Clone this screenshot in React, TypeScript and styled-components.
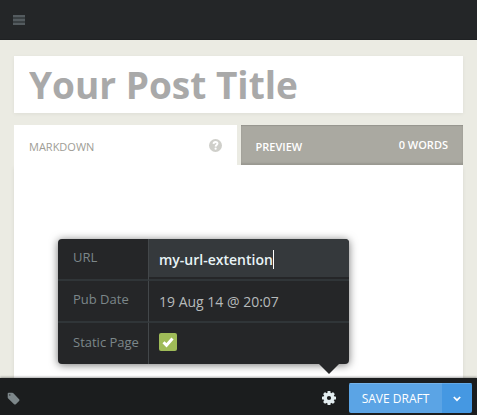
import React, { useState } from "react";
import styled, { createGlobalStyle } from "styled-components";

const GlobalStyle = createGlobalStyle`
  *, *::before, *::after { box-sizing: border-box; }
  body {
    margin: 0;
    background: #ebebe3;
    font-family: "Open Sans", "Noto Sans", sans-serif;
    font-size: 13px;
  }
  button, input { font: inherit; margin: 0; }
`;

const Page = styled.div`
  display: flex;
  flex-direction: column;
  min-height: 100vh;
`;

const TopBar = styled.header`
  display: flex;
  align-items: center;
  height: 40px;
  padding: 0 13px;
  background: #242628;
  border-bottom: 1px solid #1f2123;
`;

const IconButton = styled.button<{ $tone: string }>`
  display: flex;
  padding: 0;
  border: 0;
  background: none;
  color: ${(p) => p.$tone};
  cursor: pointer;
`;

const Editor = styled.main`
  flex: 1;
  display: flex;
  flex-direction: column;
  gap: 12px;
  padding: 16px 14px 0;
`;

const TitleInput = styled.input`
  width: 100%;
  height: 57px;
  padding: 0 15px;
  border: 0;
  outline: 0;
  background: #fff;
  box-shadow: 0 1px 4px rgba(0, 0, 0, 0.06);
  color: #a9a9a9;
  font-size: 37px;
  font-weight: 700;
  &::placeholder { color: #a9a9a9; opacity: 1; }
`;

const Workspace = styled.section`
  flex: 1;
  display: flex;
  flex-direction: column;
`;

const Tabs = styled.div`
  display: grid;
  grid-template-columns: 1fr 1fr;
  gap: 4px;
`;

const Tab = styled.div<{ $active?: boolean }>`
  display: flex;
  align-items: center;
  justify-content: space-between;
  height: 40px;
  padding: 0 15px;
  background: ${(p) => (p.$active ? "#fff" : "#aaa9a1")};
  color: ${(p) => (p.$active ? "#9e9d95" : "#fff")};
  font-size: 11px;
  font-weight: ${(p) => (p.$active ? 400 : 600)};
  box-shadow: ${(p) =>
    p.$active ? "none" : "inset 0 1px 1px rgba(0,0,0,.12), inset 0 -2px 2px rgba(0,0,0,.1)"};
`;

const TabButton = styled.button`
  padding: 2px 0 0;
  border: 0;
  background: none;
  color: inherit;
  cursor: pointer;
`;

const WordCount = styled.span`
  padding-bottom: 2px;
`;

const TextArea = styled.textarea`
  flex: 1;
  width: 100%;
  padding: 15px;
  border: 0;
  outline: 0;
  resize: none;
  background: #fff;
  box-shadow: 0 3px 4px rgba(0, 0, 0, 0.08);
`;

const BottomBar = styled.footer`
  position: relative;
  display: flex;
  align-items: center;
  justify-content: space-between;
  height: 37px;
  padding: 3px 5px 0 7px;
  background: #1b1d1e;
  box-shadow: 0 -1px 2px rgba(0, 0, 0, 0.35);
`;

const Actions = styled.div`
  display: flex;
  align-items: center;
  gap: 13px;
`;

const SettingsAnchor = styled.div`
  position: relative;
`;

const Popover = styled.form`
  position: absolute;
  right: -13px;
  bottom: 41px;
  display: grid;
  grid-template-columns: 90px 201px;
  border-radius: 4px;
  background: #252628;
  box-shadow: 0 1px 9px rgba(0, 0, 0, 0.55);
  &::after {
    content: "";
    position: absolute;
    top: 100%;
    right: 10px;
    border: 10px solid transparent;
    border-top-color: #252628;
    border-bottom: 0;
  }
`;

const Label = styled.label`
  display: flex;
  align-items: center;
  height: 42px;
  padding: 0 0 4px 15px;
  border-bottom: 2px solid #303538;
  color: #7c878a;
  &:last-of-type { height: 41px; border-bottom: 0; }
`;

const Field = styled.div<{ $focused?: boolean; $last?: boolean }>`
  display: flex;
  align-items: center;
  height: ${(p) => (p.$last ? 41 : 42)}px;
  padding-left: 10px;
  border-left: 1px solid #43474a;
  border-bottom: ${(p) => (p.$last ? "0" : "2px solid #303538")};
  border-top-right-radius: ${(p) => (p.$focused ? 4 : 0)}px;
  background: ${(p) => (p.$focused ? "linear-gradient(#35393c 38px, #252628 38px)" : "none")};
`;

const Caret = styled.span`
  width: 1px;
  height: 19px;
  background: #fff;
`;

const TextInput = styled.input<{ $strong?: boolean }>`
  field-sizing: content;
  max-width: 180px;
  padding: 0;
  border: 0;
  outline: 0;
  background: none;
  caret-color: transparent;
  color: ${(p) => (p.$strong ? "#e8f3f6" : "#b6babb")};
  font-size: 14px;
  font-weight: ${(p) => (p.$strong ? 600 : 400)};
`;

const Checkbox = styled.span`
  position: relative;
  display: flex;
  width: 18px;
  height: 18px;
  margin-bottom: 4px;
  svg {
    position: absolute;
    inset: 0;
    pointer-events: none;
  }
`;

const CheckboxInput = styled.input`
  appearance: none;
  width: 18px;
  height: 18px;
  border-radius: 2px;
  background: #4a5053;
  cursor: pointer;
  &:checked { background: #9fbb58; }
  &:not(:checked) + svg { display: none; }
`;

const SplitButton = styled.div`
  display: flex;
  height: 30px;
  border-radius: 2px;
  overflow: hidden;
  color: #fff;
`;

const SaveButton = styled.button`
  width: 93px;
  padding: 0;
  border: 0;
  background: #5ba4e5;
  box-shadow: inset 0 1px 0 #74b3ea;
  color: inherit;
  font-size: 12px;
  cursor: pointer;
`;

const SaveOptions = styled.button`
  display: flex;
  align-items: center;
  justify-content: center;
  width: 30px;
  padding: 2px 0 0;
  border: 0;
  background: #4598e2;
  box-shadow: inset 0 1px 0 #62a9e7;
  color: inherit;
  cursor: pointer;
`;

const MenuIcon = () => (
  <svg width="12" height="10" viewBox="0 0 12 10" aria-hidden="true">
    <path d="M0 0h12v10H0z" fill="#3a4043" />
    <path d="M0 0h12v2H0zM0 4h12v2H0zM0 8h12v2H0z" fill="#545b5f" />
  </svg>
);

const HelpIcon = () => (
  <svg width="13" height="13" viewBox="0 0 13 13" aria-hidden="true">
    <circle cx="6.5" cy="6.5" r="6.5" fill="currentColor" />
    <path
      d="M4.5 4.9C4.6 3.6 5.5 3 6.5 3c1.2 0 2 .6 2 1.6 0 1.4-1.8 1.4-1.9 3"
      fill="none"
      stroke="#fff"
      strokeWidth="1.9"
    />
    <circle cx="6.6" cy="9.7" r="1.1" fill="#fff" />
  </svg>
);

const TagIcon = () => (
  <svg width="13" height="13" viewBox="0 0 13 13" aria-hidden="true">
    <path
      fillRule="evenodd"
      fill="currentColor"
      d="M1.5 .8h3.8c.4 0 .8.2 1.1.5l5.7 5.9c.5.5.5 1.2 0 1.7l-3.3 3.3c-.5.5-1.2.5-1.7 0L1.2 6.6C.9 6.3.7 5.9.7 5.5V1.6c0-.4.4-.8.8-.8zM2.8 2.2a.7.7 0 1 0 0 1.4.7.7 0 0 0 0-1.4z"
    />
  </svg>
);

const GearIcon = () => (
  <svg width="14" height="14" viewBox="0 0 14 14" aria-hidden="true">
    <circle cx="7" cy="7" r="3.8" fill="none" stroke="currentColor" strokeWidth="3.4" />
    {[0, 45, 90, 135, 180, 225, 270, 315].map((angle) => (
      <rect
        key={angle}
        x="5.5"
        y="0"
        width="3"
        height="3"
        rx=".6"
        fill="currentColor"
        transform={`rotate(${angle} 7 7)`}
      />
    ))}
  </svg>
);

const CheckIcon = () => (
  <svg width="18" height="18" viewBox="0 0 18 18" aria-hidden="true">
    <path d="M4.5 9.2l3 3 6-6.7" fill="none" stroke="#fff" strokeWidth="3" />
  </svg>
);

const ChevronIcon = () => (
  <svg width="8" height="6" viewBox="0 0 8 6" aria-hidden="true">
    <path d="M.8 1L4 4.2 7.2 1" fill="none" stroke="currentColor" strokeWidth="1.7" />
  </svg>
);

export default function App() {
  const [title, setTitle] = useState("");
  const [url, setUrl] = useState("my-url-extention");
  const [date, setDate] = useState("19 Aug 14 @ 20:07");
  const [isStatic, setIsStatic] = useState(true);

  return (
    <Page>
      <GlobalStyle />
      <TopBar>
        <IconButton $tone="#4f565a" aria-label="Menu">
          <MenuIcon />
        </IconButton>
      </TopBar>
      <Editor>
        <TitleInput
          aria-label="Post title"
          placeholder="Your Post Title"
          value={title}
          onChange={(e) => setTitle(e.target.value)}
        />
        <Workspace>
          <Tabs>
            <Tab $active>
              <TabButton>MARKDOWN</TabButton>
              <IconButton $tone="#cfcfca" aria-label="Markdown help">
                <HelpIcon />
              </IconButton>
            </Tab>
            <Tab>
              <TabButton>PREVIEW</TabButton>
              <WordCount>0 WORDS</WordCount>
            </Tab>
          </Tabs>
          <TextArea aria-label="Post content" />
        </Workspace>
      </Editor>
      <BottomBar>
        <IconButton $tone="#7d878a" aria-label="Tags">
          <TagIcon />
        </IconButton>
        <Actions>
          <SettingsAnchor>
            <IconButton $tone="#e3edf0" aria-label="Post settings" aria-expanded="true">
              <GearIcon />
            </IconButton>
            <Popover>
              <Label htmlFor="url">URL</Label>
              <Field $focused>
                <TextInput id="url" $strong value={url} onChange={(e) => setUrl(e.target.value)} />
                <Caret />
              </Field>
              <Label htmlFor="date">Pub Date</Label>
              <Field>
                <TextInput id="date" value={date} onChange={(e) => setDate(e.target.value)} />
              </Field>
              <Label htmlFor="static">Static Page</Label>
              <Field $last>
                <Checkbox>
                  <CheckboxInput
                    id="static"
                    type="checkbox"
                    checked={isStatic}
                    onChange={(e) => setIsStatic(e.target.checked)}
                  />
                  <CheckIcon />
                </Checkbox>
              </Field>
            </Popover>
          </SettingsAnchor>
          <SplitButton>
            <SaveButton>SAVE DRAFT</SaveButton>
            <SaveOptions aria-label="Save options">
              <ChevronIcon />
            </SaveOptions>
          </SplitButton>
        </Actions>
      </BottomBar>
    </Page>
  );
}
